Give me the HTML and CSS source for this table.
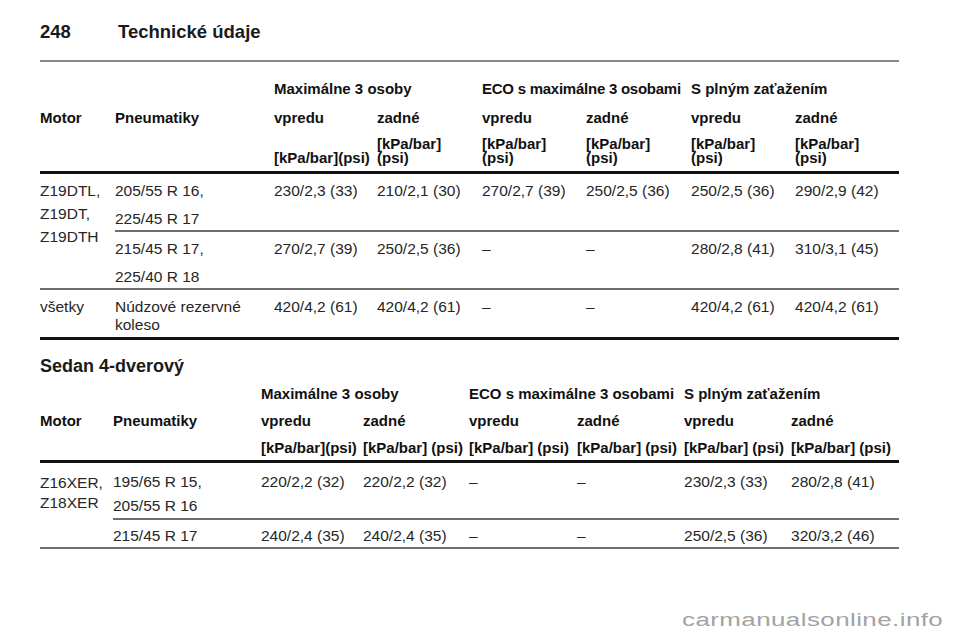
FILE: index.html
```html
<!DOCTYPE html>
<html lang="sk">
<head>
<meta charset="utf-8">
<title>248 Technické údaje</title>
<link rel="stylesheet" href="styles.css">
</head>
<body>
<div class="page">
  <div class="running"><span class="num">248</span><span>Technické údaje</span></div>
  <div class="rule"></div>

  <table class="t1">
    <colgroup>
      <col class="w75"><col class="w159"><col class="w103"><col class="w105"><col class="w104"><col class="w105"><col class="w104"><col class="w104">
    </colgroup>
    <tr class="ha">
      <th></th><th></th>
      <th colspan="2">Maximálne 3 osoby</th>
      <th colspan="2" class="tight">ECO s maximálne 3 osobami</th>
      <th colspan="2">S plným zaťažením</th>
    </tr>
    <tr class="hb">
      <th>Motor</th><th>Pneumatiky</th>
      <th>vpredu</th><th>zadné</th><th>vpredu</th><th>zadné</th><th>vpredu</th><th>zadné</th>
    </tr>
    <tr class="hc">
      <th></th><th></th>
      <th>[kPa/bar](psi)</th>
      <th>[kPa/bar]<br>(psi)</th>
      <th>[kPa/bar]<br>(psi)</th>
      <th>[kPa/bar]<br>(psi)</th>
      <th>[kPa/bar]<br>(psi)</th>
      <th>[kPa/bar]<br>(psi)</th>
    </tr>
    <tr class="r">
      <td rowspan="2" class="motor">Z19DTL,<br>Z19DT,<br>Z19DTH</td>
      <td><div class="p">205/55 R 16,</div><div class="p">225/45 R 17</div></td>
      <td>230/2,3 (33)</td><td>210/2,1 (30)</td><td>270/2,7 (39)</td><td>250/2,5 (36)</td><td>250/2,5 (36)</td><td>290/2,9 (42)</td>
    </tr>
    <tr class="r">
      <td><div class="p">215/45 R 17,</div><div class="p">225/40 R 18</div></td>
      <td>270/2,7 (39)</td><td>250/2,5 (36)</td><td>–</td><td>–</td><td>280/2,8 (41)</td><td>310/3,1 (45)</td>
    </tr>
    <tr class="rlast">
      <td>všetky</td>
      <td>Núdzové rezervné<br>koleso</td>
      <td>420/4,2 (61)</td><td>420/4,2 (61)</td><td>–</td><td>–</td><td>420/4,2 (61)</td><td>420/4,2 (61)</td>
    </tr>
  </table>

  <h2 class="section">Sedan 4-dverový</h2>

  <table class="t2">
    <colgroup>
      <col class="w73"><col class="w148"><col class="w102"><col class="w106"><col class="w108"><col class="w107"><col class="w107"><col class="w108">
    </colgroup>
    <tr class="ha">
      <th></th><th></th>
      <th colspan="2">Maximálne 3 osoby</th>
      <th colspan="2">ECO s maximálne 3 osobami</th>
      <th colspan="2">S plným zaťažením</th>
    </tr>
    <tr class="hb">
      <th>Motor</th><th>Pneumatiky</th>
      <th>vpredu</th><th>zadné</th><th>vpredu</th><th>zadné</th><th>vpredu</th><th>zadné</th>
    </tr>
    <tr class="hc">
      <th></th><th></th>
      <th>[kPa/bar](psi)</th>
      <th>[kPa/bar] (psi)</th>
      <th>[kPa/bar] (psi)</th>
      <th>[kPa/bar] (psi)</th>
      <th>[kPa/bar] (psi)</th>
      <th>[kPa/bar] (psi)</th>
    </tr>
    <tr class="r1">
      <td rowspan="2" class="motor">Z16XER,<br>Z18XER</td>
      <td><div class="p">195/65 R 15,</div><div class="p">205/55 R 16</div></td>
      <td>220/2,2 (32)</td><td>220/2,2 (32)</td><td>–</td><td>–</td><td>230/2,3 (33)</td><td>280/2,8 (41)</td>
    </tr>
    <tr class="r2">
      <td>215/45 R 17</td>
      <td>240/2,4 (35)</td><td>240/2,4 (35)</td><td>–</td><td>–</td><td>250/2,5 (36)</td><td>320/3,2 (46)</td>
    </tr>
  </table>

  <div class="wm">carmanualsonline.info</div>
</div>
</body>
</html>
```

FILE: styles.css
```css
* { box-sizing: border-box; }

html, body {
  margin: 0;
  padding: 0;
  background: #ffffff;
}

body {
  font-family: "Liberation Sans", Arial, Helvetica, sans-serif;
  color: #222222;
}

.page {
  position: relative;
  width: 960px;
  height: 642px;
  padding: 20px 61px 0 40px;
  overflow: hidden;
}

.running {
  display: flex;
  font-size: 18.5px;
  font-weight: bold;
  line-height: 23px;
  color: #1a1a1a;
}

.running .num { width: 78px; }

.rule {
  margin-top: 17px;
  border-top: 2px solid #8a8a8a;
}

table {
  border-collapse: separate;
  border-spacing: 0;
  table-layout: fixed;
  width: 859px;
}

.w73 { width: 73px; }
.w75 { width: 75px; }
.w102 { width: 102px; }
.w103 { width: 103px; }
.w104 { width: 104px; }
.w105 { width: 105px; }
.w106 { width: 106px; }
.w107 { width: 107px; }
.w108 { width: 108px; }
.w148 { width: 148px; }
.w159 { width: 159px; }

th {
  padding: 0;
  font-size: 15px;
  font-weight: bold;
  line-height: 17px;
  text-align: left;
  vertical-align: bottom;
  white-space: nowrap;
  color: #111111;
}

td {
  padding: 0;
  font-size: 15.5px;
  line-height: 18px;
  text-align: left;
  vertical-align: top;
  white-space: nowrap;
  color: #262626;
}

.tight { letter-spacing: -0.25px; }

/* table 1 */
.t1 .ha th { padding-top: 18px; }
.t1 .hb th { padding-top: 12px; }
.t1 .hc th {
  padding: 11px 0 6px;
  line-height: 14px;
  border-bottom: 3px solid #111111;
}

.t1 .r td {
  padding: 8px 0 2px;
  border-bottom: 2px solid #6e6e6e;
}

.t1 .p + .p { margin-top: 10px; }

.t1 td.motor {
  padding-top: 5px;
  line-height: 23px;
}

.t1 .rlast td {
  padding: 8px 0 3px;
  border-bottom: 3px solid #111111;
}

/* section heading */
.section {
  margin: 15px 0 0;
  font-size: 18px;
  font-weight: bold;
  line-height: 22px;
  color: #1a1a1a;
}

/* table 2 */
.t2 .ha th { padding-top: 8px; }
.t2 .hb th { padding-top: 10px; }
.t2 .hc th {
  padding: 10px 0 4px;
  border-bottom: 3px solid #111111;
}

.t2 .r1 td {
  padding: 10px 0 3px;
  border-bottom: 2px solid #6e6e6e;
}

.t2 .p + .p { margin-top: 6px; }

.t2 td.motor { padding-top: 10px; line-height: 20px; }

.t2 .r2 td {
  padding: 7px 0 2px;
  border-bottom: 2px solid #6e6e6e;
}

/* watermark */
.wm {
  position: absolute;
  left: 682px;
  top: 610px;
  font-size: 18px;
  line-height: 21px;
  letter-spacing: 0.3px;
  color: #a3a3a3;
  transform: scaleX(1.44);
  transform-origin: left top;
  white-space: nowrap;
}
```
